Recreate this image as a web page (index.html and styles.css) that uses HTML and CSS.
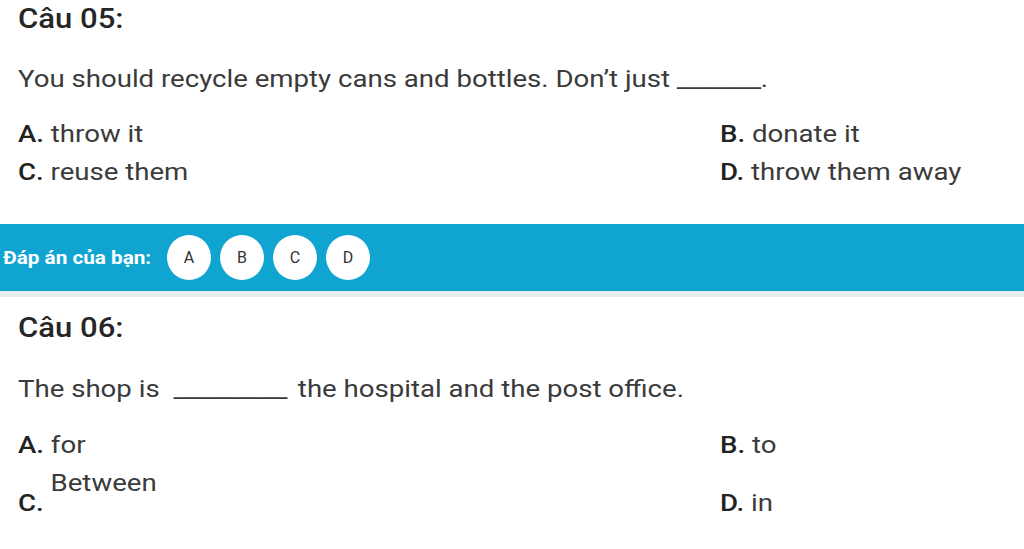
FILE: index.html
```html
<!DOCTYPE html>
<html lang="vi">
<head>
    <meta charset="UTF-8">
    <meta name="viewport" content="width=device-width, initial-scale=1.0">
    <title>Bài tập trắc nghiệm</title>
    <link rel="stylesheet" href="styles.css">
</head>
<body>
    <div class="question q5">
        <h2 class="q-title">Câu 05:</h2>
        <p class="q-text">You should recycle empty cans and bottles. Don’t just <span class="blank">_______</span>.</p>
        <div class="options">
            <div class="opt"><b>A.</b> throw it</div>
            <div class="opt"><b>B.</b> donate it</div>
            <div class="opt"><b>C.</b> reuse them</div>
            <div class="opt"><b>D.</b> throw them away</div>
        </div>
    </div>

    <div class="answer-bar">
        <span class="answer-label">Đáp án của bạn:</span>
        <div class="choices">
            <span class="choice">A</span>
            <span class="choice">B</span>
            <span class="choice">C</span>
            <span class="choice">D</span>
        </div>
    </div>

    <div class="question q6">
        <h2 class="q-title">Câu 06:</h2>
        <p class="q-text">The shop is <span class="blank long">__________</span> the hospital and the post office.</p>
        <div class="options">
            <div class="opt"><b>A.</b> for</div>
            <div class="opt"><b>B.</b> to</div>
            <div class="opt"><b>C.</b> <span class="raised">Between</span></div>
            <div class="opt"><b>D.</b> in</div>
        </div>
    </div>
</body>
</html>
```

FILE: styles.css
```css
body {
    margin: 0;
    font-family: Roboto, 'Liberation Sans', sans-serif;
    background: #fff;
    color: #3b3b3b;
}

/* the text in this page is set a little wide */
.q-title,
.q-text,
.opt,
.answer-label {
    width: fit-content;
    transform: scaleX(1.15);
    transform-origin: left center;
}

.question {
    padding-left: 18px;
}

.q5 {
    padding-top: 3px;
    padding-bottom: 36px;
}

.q6 {
    padding-top: 15px;
}

.q-title {
    margin: 0;
    font-size: 27px;
    line-height: 32px;
    font-weight: 500;
    color: #262626;
}

.q-text {
    margin: 28px 0 23px;
    font-size: 24px;
    line-height: 32px;
}

.q6 .q-text {
    margin-top: 29px;
    margin-bottom: 24px;
}

.blank {
    letter-spacing: -0.4px;
}

.blank.long {
    letter-spacing: -1px;
    margin: 0 4px 0 6px;
}

.options {
    display: grid;
    grid-template-columns: 702px 1fr;
    row-gap: 6px;
    align-items: baseline;
}

.opt {
    font-size: 24px;
    line-height: 32px;
}

.opt b {
    font-weight: 500;
    color: #222;
}

.raised {
    display: inline-block;
    vertical-align: 20px;
}

.answer-bar {
    display: flex;
    align-items: center;
    height: 67px;
    padding-left: 3px;
    background: #10a5d1;
    border-bottom: 6px solid #e7edef;
}

.answer-label {
    display: inline-block;
    color: #fff;
    font-size: 18px;
    font-weight: 700;
    margin-right: 35px;
}

.choices {
    display: flex;
    gap: 9px;
}

.choice {
    width: 44px;
    height: 45px;
    border-radius: 50%;
    background: #fff;
    color: #333;
    font-size: 16px;
    display: flex;
    justify-content: center;
    align-items: center;
}
```
